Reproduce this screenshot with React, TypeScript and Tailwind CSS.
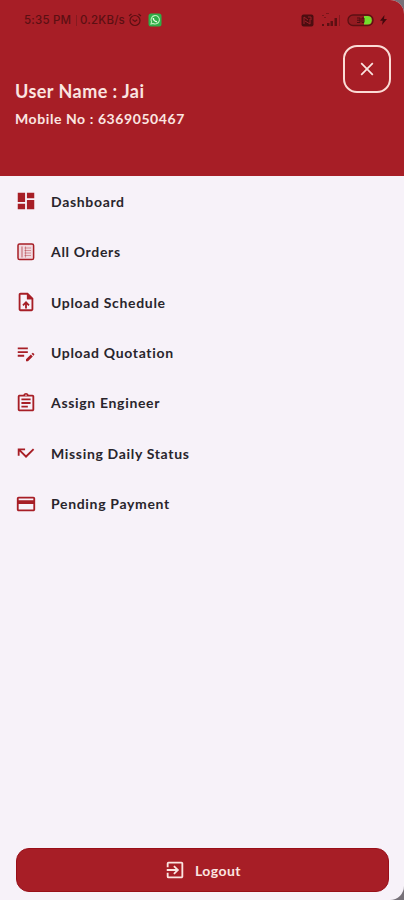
import type { ReactNode } from "react";
import {
  MdDashboard,
  MdOutlineUploadFile,
  MdOutlineEditNote,
  MdOutlineAssignment,
  MdCallMissed,
  MdCreditCard,
  MdExitToApp,
} from "react-icons/md";

function OrdersIcon() {
  return (
    <svg width="22" height="22" viewBox="0 0 22 22" fill="none" stroke="currentColor">
      <rect x="3" y="3" width="15.6" height="15.6" rx="1.6" fill="#f0d9df" strokeWidth="1.5" />
      <path d="M7 5.5v11" strokeWidth="1.3" opacity=".5" />
      <path d="M9.5 7h6.5M9.5 9.5h6.5M9.5 12h6.5M9.5 14.5h6.5" strokeWidth="1" opacity=".4" />
      <path d="M10.5 5.5v11" strokeWidth="1.1" opacity=".4" />
    </svg>
  );
}

const items: { label: string; icon: ReactNode }[] = [
  { label: "Dashboard", icon: <MdDashboard size={22} /> },
  { label: "All Orders", icon: <OrdersIcon /> },
  {
    label: "Upload Schedule",
    icon: (
      <span className="relative block">
        <MdOutlineUploadFile size={22} />
        <svg className="absolute left-0 top-0" width="22" height="22" viewBox="0 0 24 24" fill="currentColor">
          <path d="M13 3l6 6h-6z" />
        </svg>
      </span>
    ),
  },
  { label: "Upload Quotation", icon: <MdOutlineEditNote size={22} /> },
  { label: "Assign Engineer", icon: <MdOutlineAssignment size={22} /> },
  { label: "Missing Daily Status", icon: <MdCallMissed size={22} /> },
  { label: "Pending Payment", icon: <MdCreditCard size={22} /> },
];

function StatusBar() {
  return (
    <div className="flex h-[40px] items-center pl-6 pr-[17px] font-['Inter',sans-serif] text-[11.5px] font-medium text-[#5c1013]">
      <span className="w-[47px] whitespace-nowrap pt-[2px] tracking-[0.2px]">5:35 PM</span>
      <span className="ml-[5px] h-[11px] w-px bg-[#861a20]" />
      <span className="ml-[3px] w-[46px] whitespace-nowrap pt-[2px] tracking-[0.2px]">0.2KB/s</span>
      <svg className="ml-[2px]" width="14" height="14" viewBox="0 0 14 14" fill="none" stroke="currentColor" strokeWidth="1.2">
        <circle cx="7" cy="7.5" r="5" />
        <path d="M1 3l2.5-2M13 3l-2.5-2M4.5 6.5L7 8.5l2.2-1.7" />
      </svg>
      <svg className="ml-[6px]" width="14" height="14" viewBox="0 0 14 14">
        <rect x="0.5" y="0.5" width="13" height="13" rx="2.5" fill="#2fae48" />
        <path d="M3 11l.6-2.2A4.2 4.2 0 1 1 5.2 10.4z" fill="none" stroke="#b9edb8" strokeWidth="1.1" />
        <path d="M5.3 4.9c0 2 1.8 3.8 3.7 3.8" stroke="#e1fadf" strokeWidth="1.5" fill="none" />
      </svg>
      <svg className="ml-auto" width="13" height="13" viewBox="0 0 13 13">
        <rect x="0.5" y="0.5" width="12" height="12" rx="2" fill="#4c0d10" />
        <path d="M3 10V3l4 3M4 7l5 3V5M7 3h3v3" fill="none" stroke="#9a2028" strokeWidth="1" />
      </svg>
      <svg className="ml-[7px]" width="20" height="14" viewBox="0 0 20 14" fill="#5c1013">
        <path d="M1 2h2v1H1zM5 0h3v1H5zM3 4h2v1H3z" opacity=".6" />
        <path d="M1 11h2v2H1zM6 10h2.5v3H6zM9.5 8H12v5H9.5zM13.5 5H16v8h-2.5z" />
        <path d="M18 2h1v11h-1z" opacity=".45" />
      </svg>
      <svg className="ml-[6px]" width="28" height="13" viewBox="0 0 28 13">
        <rect x="1" y="1" width="25" height="10.5" rx="5" fill="#941b21" stroke="#5c1013" strokeWidth="1.3" />
        <path d="M17 2h3.5q4.3 0 4.3 4.2t-4.3 4.3H17z" fill="#73df2c" />
        <path d="M10 4h3v4.5h-3M13 6.2h-3M15 4h2v4.5h-2z" fill="none" stroke="#4c0d10" />
      </svg>
      <svg className="ml-[5px]" width="7" height="10" viewBox="0 0 7 10" fill="#43090d">
        <path d="M4.5 0L0 5.7h2.7L2 10l5-6H4z" />
      </svg>
    </div>
  );
}

export default function App() {
  return (
    <div className="h-[900px] w-[404px] overflow-hidden bg-[#777179] font-['Lato',sans-serif] font-bold">
      <div className="flex h-full flex-col overflow-hidden rounded-r-[14px] bg-[#f7f2f9]">
        <header className="h-[175.5px] shrink-0 bg-[#a71e26] text-[#fbe5e1]">
          <StatusBar />
          <div className="flex items-start justify-between pl-[15px] pr-[13px] pt-[5px]">
            <div className="pt-[34px]">
              <h1 className="whitespace-nowrap text-[18px] leading-6 tracking-[0.45px]">User Name : Jai</h1>
              <p className="mt-[4px] whitespace-nowrap text-[14px] leading-6 tracking-[0.58px]">Mobile No : 6369050467</p>
            </div>
            <button aria-label="Close" className="flex size-12 items-center justify-center rounded-[14px] border-2 border-[#fbdcd6]">
              <svg width="14" height="14" viewBox="0 0 14 14" stroke="currentColor" strokeWidth="1.7">
                <path d="M1.2 1.2l11.6 11.6M12.8 1.2L1.2 12.8" />
              </svg>
            </button>
          </div>
        </header>
        <nav className="flex-1 pt-[0.7px]">
          {items.map(({ label, icon }) => (
            <a key={label} className="flex h-[50.4px] items-center pl-[15px] text-[14px] tracking-[0.67px] text-[#29252c]">
              <span className="w-9 text-[#a71e26]">{icon}</span>
              {label}
            </a>
          ))}
        </nav>
        <button className="mb-2 ml-4 mr-[15px] flex h-[44px] shrink-0 items-center justify-center rounded-[13px] border border-[#990f19] bg-[#a71e26] text-[14px] tracking-[0.45px] text-[#fbe5e1]">
          <MdExitToApp size={22} />
          <span className="ml-[9px]">Logout</span>
        </button>
      </div>
    </div>
  );
}
